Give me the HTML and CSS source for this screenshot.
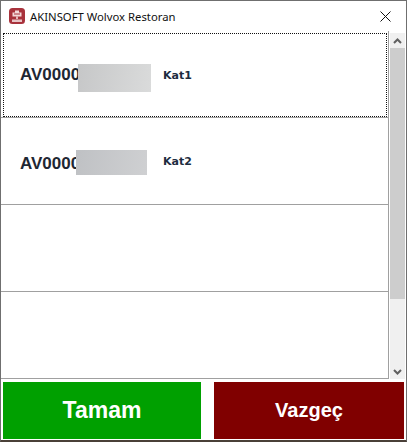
FILE: index.html
```html
<!DOCTYPE html>
<html lang="tr">
<head>
<meta charset="utf-8">
<title>AKINSOFT Wolvox Restoran</title>
<link rel="stylesheet" href="styles.css">
</head>
<body>
<div class="window">
  <header class="titlebar">
    <svg class="app-icon" viewBox="0 0 16 16" width="16" height="16">
      <rect x="0" y="0" width="16" height="16" rx="3.500" fill="#a8323c"/>
      <path d="M6 2.500h4v2h2.500v4h-9v-4H6z" fill="#f3d9da"/>
      <rect x="5" y="5.500" width="6" height="1" fill="#a8323c"/>
      <path d="M7.200 8.500h1.600v2.500H7.200z" fill="#f3d9da"/>
      <rect x="3" y="11.500" width="10" height="2.500" fill="#e8c4c6"/>
    </svg>
    <span class="title">AKINSOFT Wolvox Restoran</span>
    <svg class="close" viewBox="0 0 11 11" width="11" height="11">
      <path d="M.5.5l10 10M10.500.5l-10 10" stroke="#111" stroke-width="1" fill="none"/>
    </svg>
  </header>
  <main class="content">
    <div class="list-area">
      <div class="list">
        <div class="row row-focus">
          <span class="code">AV0000<i class="mask mask-one"></i></span>
          <span class="floor">Kat1</span>
        </div>
        <div class="row row-second">
          <span class="code">AV0000<i class="mask mask-two"></i></span>
          <span class="floor">Kat2</span>
        </div>
        <div class="row"></div>
        <div class="row"></div>
      </div>
      <div class="scrollbar">
        <div class="arrow">
          <svg viewBox="0 0 9 6" width="9" height="6"><path d="M1 5l3.500-3.500L8 5" stroke="#606060" stroke-width="2" fill="none"/></svg>
        </div>
        <div class="thumb"></div>
        <div class="track"></div>
        <div class="arrow">
          <svg viewBox="0 0 9 6" width="9" height="6"><path d="M1 1l3.500 3.500L8 1" stroke="#606060" stroke-width="2" fill="none"/></svg>
        </div>
      </div>
    </div>
    <div class="actions">
      <button class="btn btn-ok" type="button">Tamam</button>
      <button class="btn btn-cancel" type="button">Vazgeç</button>
    </div>
  </main>
</div>
</body>
</html>
```
FILE: styles.css
```css
* { box-sizing: border-box; }
html, body { margin: 0; padding: 0; }
body { width: 407px; height: 442px; background: #fff; overflow: hidden; }
.window {
  width: 407px;
  height: 442px;
  display: flex;
  flex-direction: column;
  background: #fff;
  border: 1px solid #6f6f6f;
  border-bottom: 2px solid #4a4038;
}
.titlebar {
  height: 30px;
  flex: none;
  display: flex;
  align-items: center;
  padding: 0 15px 0 8px;
}
.app-icon { flex: none; }
.title {
  margin-left: 5px;
  font: 11.3px "Noto Sans", sans-serif;
  color: #111;
}
.close { margin-left: auto; flex: none; }
.content { flex: 1; display: flex; flex-direction: column; min-height: 0; }
.list-area {
  height: 348px;
  flex: none;
  display: flex;
}
.list {
  width: 388px;
  flex: none;
  display: flex;
  flex-direction: column;
  border-right: 1px solid #a0a0a0;
}
.row {
  height: 87px;
  flex: none;
  display: flex;
  align-items: center;
  padding-left: 19px;
  border-bottom: 1px solid #a0a0a0;
  position: relative;
}
.row-focus { padding-top: 2px; }
.row-second { padding-top: 5px; }
.row-focus::before {
  content: "";
  position: absolute;
  left: 2px; right: 1px; top: 2px; bottom: 0;
  border: 1px dotted #111;
}
.code {
  position: relative;
  width: 143px;
  flex: none;
  font: bold 17px "Liberation Sans", sans-serif;
  color: #1f2733;
  white-space: nowrap;
}
.mask { position: absolute; display: block; }
.mask-one {
  left: 58px; top: -1px; width: 73px; height: 28px;
  background: linear-gradient(100deg, #c6c7c8, #dadbdb);
}
.mask-two {
  left: 56px; top: -4px; width: 71px; height: 25px;
  background: linear-gradient(100deg, #bfc1c4, #cfd0d2);
}
.floor {
  font: bold 11px "DejaVu Sans", sans-serif;
  color: #1d2c40;
}
.row-second .floor { margin-top: -4px; }
.scrollbar {
  flex: 1;
  display: flex;
  flex-direction: column;
  margin: 2px 1px 0 1px;
  background: #f0f0f0;
}
.arrow {
  height: 15px;
  flex: none;
  display: flex;
  align-items: center;
  justify-content: center;
}
.thumb { height: 251px; flex: none; background: #cdcdcd; }
.track { flex: 1; }
.actions {
  flex: 1;
  display: flex;
  gap: 13px;
  padding: 3px 2px 1px 2px;
}
.btn {
  border: 0;
  padding: 0;
  color: #fff;
  font-family: "Liberation Sans", sans-serif;
  font-weight: bold;
}
.btn-ok { width: 198px; background: #00a000; font-size: 23px; }
.btn-cancel { flex: 1; background: #800000; font-size: 20px; }
```
